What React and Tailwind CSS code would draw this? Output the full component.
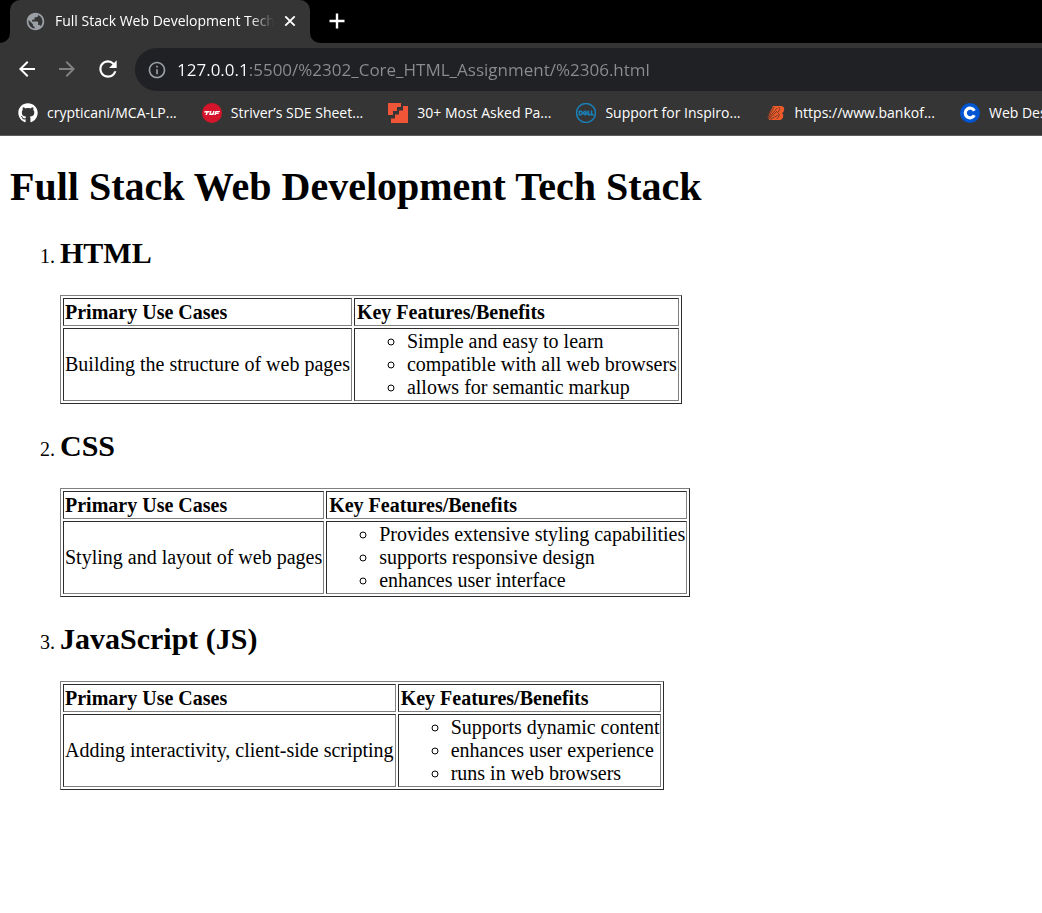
import React from "react";
import { MdArrowBack, MdArrowForward, MdRefresh, MdPublic, MdInfoOutline } from "react-icons/md";
import { FaGithub } from "react-icons/fa";
import { SiDell } from "react-icons/si";

const CloseIcon = () => (
  <svg viewBox="0 0 16 16" className="size-4" aria-hidden="true">
    <path d="M3.300 3.300 12.700 12.700M12.700 3.300 3.300 12.700" fill="none" stroke="currentColor" strokeWidth="1.900" />
  </svg>
);

const PlusIcon = () => (
  <svg viewBox="0 0 24 24" className="size-6" aria-hidden="true">
    <path d="M12 4.500V19.500M4.500 12H19.500" fill="none" stroke="currentColor" strokeWidth="2.400" />
  </svg>
);

const TufLogo = () => (
  <svg viewBox="0 0 20 20" className="size-5 shrink-0" aria-hidden="true">
    <circle cx="10" cy="10" r="10" fill="#d5152b" />
    <path d="M2.6 8h5.2l-.4 1.4H5.8L5 12H3.4l.8-2.6h-2zM8.2 8h1.4l-.8 2.6h1.6l.8-2.6h1.5l-1.2 4H7.1zM13.4 8H18l-.4 1.2h-3.1l-.2.6h2.6l-.4 1.1h-2.5l-.3 1.1h-1.5z" fill="#fff" />
  </svg>
);

const StepsLogo = () => (
  <svg viewBox="0 0 20 20" className="size-5 shrink-0" aria-hidden="true">
    <path d="M0 0h13v4H9v4H5v4H0z" fill="#f05537" />
    <path d="M20 3V20H3V15.500h4v-4h4v-4h4V3z" fill="#f05537" />
  </svg>
);

const BankLogo = () => (
  <svg viewBox="0 0 20 20" className="size-5 shrink-0" aria-hidden="true">
    <path d="M7 3h8.500q3 .5 2.700 3.500-.2 2.500-2.200 3.500 1.800 1 1.200 3.700-.7 3-3.700 3.300H3.500L1.500 14.500z" fill="#f15a29" />
    <path d="M1.500 15 4.500 6M2 15.500 8 4M2.500 15.500 11 5M3.500 16 11 8M4.500 16.500 12 12M12.500 4q3 2-1 5.500 4 2-1 6.500" fill="none" stroke="#5a3528" strokeWidth=".8" />
  </svg>
);

const CLogo = () => (
  <svg viewBox="0 0 20 20" className="size-5 shrink-0" aria-hidden="true">
    <circle cx="10" cy="10" r="10" fill="#0056d2" />
    <path d="M14.300 7.700A4.800 4.800 0 1 0 14.300 12.300" fill="none" stroke="#fff" strokeWidth="3.200" />
  </svg>
);

const bookmarks = [
  { label: "crypticani/MCA-LP...", icon: <FaGithub className="size-5 shrink-0" /> },
  { label: "Striver’s SDE Sheet...", icon: <TufLogo /> },
  { label: "30+ Most Asked Pa...", icon: <StepsLogo /> },
  { label: "Support for Inspiro...", icon: <SiDell className="size-5 shrink-0 stroke-[#1a86c0] stroke-[0.6] text-[#1a86c0]" /> },
  { label: "https://www.bankof...", icon: <BankLogo /> },
  { label: "Web Des", icon: <CLogo /> },
];

const technologies = [
  {
    name: "HTML",
    use: "Building the structure of web pages",
    features: ["Simple and easy to learn", "compatible with all web browsers", "allows for semantic markup"],
  },
  {
    name: "CSS",
    use: "Styling and layout of web pages",
    features: ["Provides extensive styling capabilities", "supports responsive design", "enhances user interface"],
  },
  {
    name: "JavaScript (JS)",
    use: "Adding interactivity, client-side scripting",
    features: ["Supports dynamic content", "enhances user experience", "runs in web browsers"],
  },
];

const cell = "border border-t-[#2c2c2c] border-l-[#2c2c2c] border-r-[#808080] border-b-[#808080] py-px pr-px text-left whitespace-nowrap";

function TechTable({ use, features }) {
  return (
    <table className="border-separate border-spacing-[2px] border border-t-[#808080] border-l-[#808080] border-r-[#2c2c2c] border-b-[#2c2c2c]">
      <thead>
        <tr>
          <th className={`${cell} pl-px leading-6 font-bold`}>Primary Use Cases</th>
          <th className={`${cell} pl-[2px] leading-6 font-bold`}>Key Features/Benefits</th>
        </tr>
      </thead>
      <tbody>
        <tr>
          <td className={`${cell} pl-px`}>{use}</td>
          <td className={`${cell} pl-[2px]`}>
            <ul className="list-[circle] pl-[50px]">
              {features.map((f) => (
                <li key={f}>{f}</li>
              ))}
            </ul>
          </td>
        </tr>
      </tbody>
    </table>
  );
}

function Browser() {
  return (
    <header className="overflow-hidden border-b border-[#5c5c5c] bg-[#353535] font-['Open_Sans',sans-serif] text-white">
      <div className="flex h-[43px] items-stretch bg-black">
        <div className="flex w-[10px] shrink-0 bg-[#353535]">
          <div className="w-full rounded-br-[10px] bg-black" />
        </div>
        <div className="flex shrink-0 bg-black">
          <div className="flex w-[300px] items-center rounded-t-[10px] bg-[#353535] pr-3 pb-px pl-[15px]">
            <MdPublic className="size-[21px] shrink-0 text-[#9aa0a6]" />
            <span className="ml-[9px] w-[219px] overflow-hidden text-[14px] leading-5 whitespace-nowrap [mask-image:linear-gradient(to_right,black_195px,transparent_219px)]">
              Full Stack Web Development Tech
            </span>
            <button aria-label="Close tab" className="ml-2 shrink-0">
              <CloseIcon />
            </button>
          </div>
        </div>
        <div className="flex w-[10px] shrink-0 bg-[#353535]">
          <div className="w-full rounded-bl-[10px] bg-black" />
        </div>
        <button aria-label="New tab" className="ml-[5px] pb-px">
          <PlusIcon />
        </button>
      </div>
      <div className="flex items-center pt-[5px]">
        <nav className="flex w-[135px] shrink-0 items-center gap-4 pb-px pl-[15px]">
          <button aria-label="Back"><MdArrowBack className="size-6" /></button>
          <button aria-label="Forward"><MdArrowForward className="size-6 text-[#828282]" /></button>
          <button aria-label="Reload"><MdRefresh className="size-[26px]" /></button>
        </nav>
        <div className="flex h-[43px] flex-1 items-center rounded-l-full bg-[#202124] pl-3">
          <MdInfoOutline className="size-5 shrink-0 text-[#9aa0a6]" />
          <input
            aria-label="Address"
            readOnly
            value="127.0.0.1:5500/%2302_Core_HTML_Assignment/%2306.html"
            className="ml-[10px] flex-1 bg-[linear-gradient(to_right,#ffffff_71px,#8b8d90_71px)] bg-clip-text text-[17px] leading-6 text-transparent outline-none"
          />
        </div>
      </div>
      <div className="flex h-11 items-center gap-[25px] pl-[18px]">
        {bookmarks.map((b) => (
          <a key={b.label} href="#" className="flex shrink-0 items-center gap-[9px] text-[14px] leading-5 whitespace-nowrap">
            {b.icon}
            {b.label}
          </a>
        ))}
      </div>
    </header>
  );
}

export default function App() {
  return (
    <div className="min-h-screen bg-white">
      <Browser />
      <main className="px-[10px] pt-7 pb-5 font-['Liberation_Serif',serif] text-[20px] leading-[23px] text-black">
        <h1 className="mb-[27px] text-[40px] leading-[45px] font-bold">Full Stack Web Development Tech Stack</h1>
        <ol className="flex list-decimal flex-col gap-[25px] pl-[50px]">
          {technologies.map((t) => (
            <li key={t.name}>
              <h2 className="mb-[25px] text-[30px] leading-[34px] font-bold">{t.name}</h2>
              <TechTable use={t.use} features={t.features} />
            </li>
          ))}
        </ol>
      </main>
    </div>
  );
}
